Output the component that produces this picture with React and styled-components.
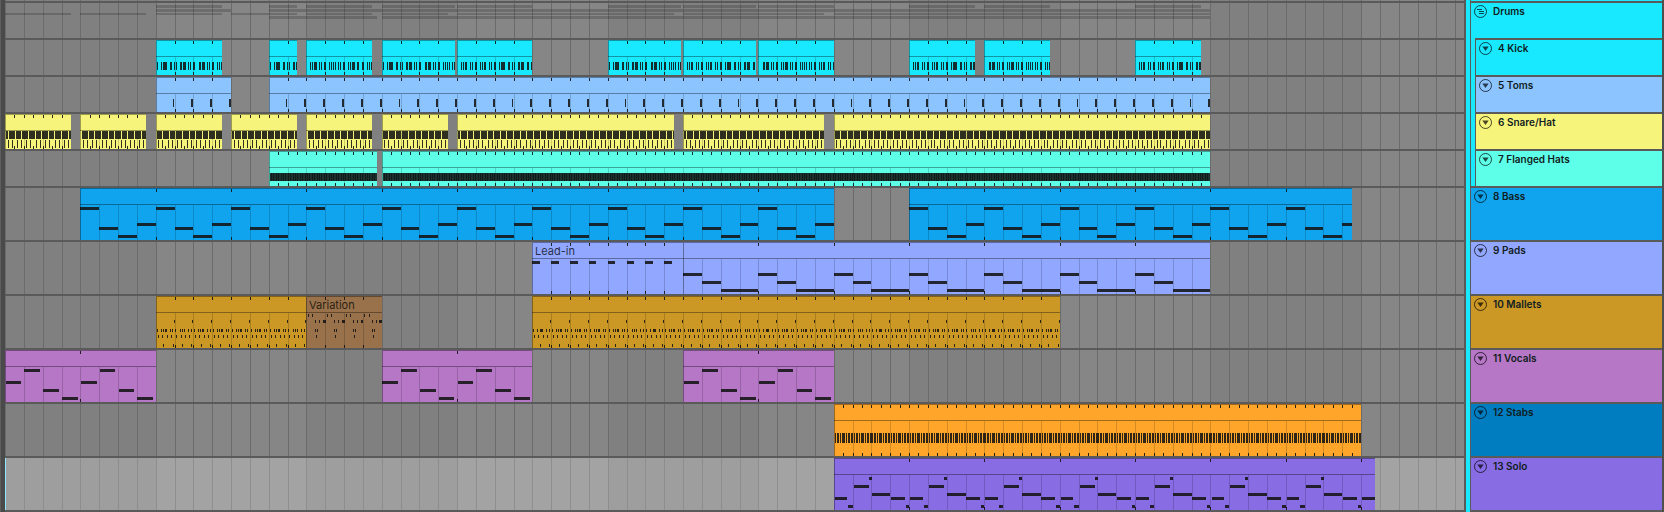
import React from 'react'
import styled, { createGlobalStyle } from 'styled-components'

const BARS = 160
const BAR_WIDTH = 18.834
const TITLE = 16

// x of a bar line, in whole pixels
const bar = (n) => Math.round(n * BAR_WIDTH)

const range = (from, to, step) => {
  const list = []
  for (let n = from; n < to; n += step) list.push(n)
  return list
}

// kick hits: [x, width] in pixels from the start of the clip
const kickA = [[1, 1], [5, 1], [7, 4], [14, 2], [18, 1], [20, 1], [24, 2], [27, 3], [32, 1], [34, 1], [37, 2], [43, 2], [46, 3], [51, 1], [53, 1], [56, 2], [61, 1], [63, 1], [65, 1], [67, 1], [70, 1], [72, 1]]
const kickB = [[4, 1], [6, 1], [8, 2], [13, 1], [15, 1], [18, 2], [23, 1], [25, 1], [27, 2], [32, 1], [34, 1], [37, 2], [42, 1], [44, 4], [51, 2], [55, 1], [57, 1], [61, 2], [64, 3], [70, 2], [74, 1]]
const kickC = [[5, 2], [8, 3], [13, 1], [15, 1], [18, 2], [23, 1], [25, 1], [27, 3], [32, 1], [34, 1], [37, 2], [42, 1], [44, 1], [46, 1], [48, 1], [51, 1], [53, 1], [56, 2], [61, 1], [63, 1], [65, 2], [70, 1], [72, 1], [75, 1]]
const kickD = [[4, 1], [6, 1], [8, 3], [13, 1], [15, 1], [18, 2], [23, 1], [25, 1], [27, 1], [29, 1], [32, 1], [34, 1], [37, 2], [42, 1], [44, 1], [46, 3], [51, 2], [56, 2], [61, 1], [63, 1], [65, 1]]

// stab hits: [x, width] in pixels from each bar line
const stabHits = [[1, 1], [3, 2], [6, 1], [8, 3], [12, 1], [14, 2], [17, 2]]

// a phrase is a list of [start, length, y, height], start and length in bars
const phrase = (clip, every, notes) => {
  const origin = bar(clip.from)
  return range(clip.from, clip.to, every).flatMap((n) =>
    notes.map(([start, length, y, height = 3]) => {
      const x = bar(n + start)
      return { x: x - origin, w: Math.max(1, bar(n + start + length) - x), y, h: height }
    })
  )
}

const drawKick = (clip) => clip.hits.map(([x, w]) => ({ x, w, y: 22, h: 8 }))

const drawToms = (clip) => phrase(clip, 1, [[0.9, 0.095, 22, 8]])

const drawSnare = (clip) => {
  const width = bar(clip.to) - bar(clip.from)
  const gaps = range(clip.gap, width + 7, 6.63).map(Math.round)
  const blocks = gaps.map((g, i) => {
    const x = i === 0 ? 1 : gaps[i - 1] + 1
    return { x, w: Math.max(0, g - x), y: 17, h: 8 }
  })
  return [...blocks, ...phrase(clip, 0.5, [[0.14, 0.05, 26, 8], [0.35, 0.05, 26, 8]])]
}

const drawHats = (clip) => [{ x: 1, w: bar(clip.to) - bar(clip.from), y: 22, h: 8 }]

const drawBass = (clip) => phrase(clip, 4, [[0, 1, 19], [1, 1, 39], [2, 1, 47], [3, 1, 35]])

const drawLeadIn = (clip) => phrase(clip, 1, [[0, 0.4, 19]])

const drawPads = (clip) => phrase(clip, 4, [[0, 1, 31], [1, 1, 39], [2, 2, 47]])

const drawMallets = (clip) => phrase(clip, 1, [
  [0.95, 0.05, 24],
  [0.05, 0.05, 33], [0.27, 0.05, 33], [0.38, 0.05, 33], [0.48, 0.1, 33], [0.74, 0.05, 33], [0.86, 0.05, 33],
  [0.1, 0.05, 39], [0.32, 0.05, 39], [0.58, 0.05, 39], [0.79, 0.05, 39],
  [0.4, 0.05, 48], [0.9, 0.05, 48]
])

const drawVariation = (clip) => phrase(clip, 1, [
  [0.08, 0.05, 18], [0.32, 0.05, 18],
  [0.47, 0.05, 24], [0.68, 0.05, 24], [0.88, 0.15, 24],
  [0.47, 0.05, 33], [0.58, 0.05, 33],
  [0.52, 0.05, 39]
])

const drawVocals = (clip) => phrase(clip, 4, [[0.03, 0.83, 31], [1.03, 0.83, 19], [2.03, 0.83, 39], [3.03, 0.83, 47]])

const drawStabs = (clip) => range(clip.from, clip.to, 1).flatMap((n) =>
  stabHits.map(([x, w]) => ({ x: bar(n) - bar(clip.from) + x, w, y: 29, h: 10 }))
)

const drawSolo = (clip) => phrase(clip, 4, [
  [0.06, 0.67, 39], [0.78, 0.22, 47], [1.06, 0.8, 27], [1.86, 0.15, 19],
  [2.01, 1, 35], [3.03, 0.73, 39], [3.82, 0.18, 47]
])

const drumTracks = [
  {
    name: '4 Kick', color: '#19e9ff', ticks: 1, draw: drawKick,
    clips: [
      { from: 8, to: 11.5, hits: kickA },
      { from: 14, to: 15.5, hits: kickA },
      { from: 16, to: 19.5, hits: kickD },
      { from: 20, to: 23.9, hits: kickA },
      { from: 24, to: 28, hits: kickB },
      { from: 32, to: 35.9, hits: kickA },
      { from: 36, to: 39.9, hits: kickB },
      { from: 40, to: 44, hits: kickC },
      { from: 48, to: 51.5, hits: kickB },
      { from: 52, to: 55.5, hits: kickC },
      { from: 60, to: 63.5, hits: kickB }
    ]
  },
  {
    name: '5 Toms', color: '#8bc4ff', ticks: 1, draw: drawToms,
    clips: [{ from: 8, to: 12 }, { from: 14, to: 64 }]
  },
  {
    name: '6 Snare/Hat', color: '#f7f47c', ticks: 0.5, draw: drawSnare,
    clips: [
      { from: 0, to: 3.5, gap: 3 },
      { from: 4, to: 7.5, gap: 1 },
      { from: 8, to: 11.5, gap: 6 },
      { from: 12, to: 15.5, gap: 3 },
      { from: 16, to: 19.5, gap: 1 },
      { from: 20, to: 23.5, gap: 6 },
      { from: 24, to: 35.5, gap: 3 },
      { from: 36, to: 43.5, gap: 3 },
      { from: 44, to: 64, gap: 6 }
    ]
  },
  {
    name: '7 Flanged Hats', color: '#5dffe8', ticks: 0.5, draw: drawHats, shimmer: true,
    clips: [{ from: 14, to: 19.75 }, { from: 20, to: 64 }]
  }
]

const tracks = [
  {
    name: '8 Bass', color: '#10a4ee', ticks: 4, draw: drawBass,
    clips: [{ from: 4, to: 44 }, { from: 48, to: 71.5 }]
  },
  {
    name: '9 Pads', color: '#92a7ff', ticks: 4, draw: drawPads,
    clips: [
      { from: 28, to: 36, label: 'Lead-in', ticks: 1, draw: drawLeadIn },
      { from: 36, to: 64 }
    ]
  },
  {
    name: '10 Mallets', color: '#cb9826', ticks: 1, draw: drawMallets,
    clips: [
      { from: 8, to: 16 },
      { from: 16, to: 20, label: 'Variation', color: '#99724b', draw: drawVariation },
      { from: 28, to: 56 }
    ]
  },
  {
    name: '11 Vocals', color: '#b677c6', ticks: 4, draw: drawVocals,
    clips: [{ from: 0, to: 8 }, { from: 20, to: 28 }, { from: 36, to: 44 }]
  },
  {
    name: '12 Stabs', color: '#007dc0', clipColor: '#ffa529', ticks: 0.5, draw: drawStabs,
    clips: [{ from: 44, to: 72 }]
  },
  {
    name: '13 Solo', color: '#886ce4', ticks: 4, draw: drawSolo, selected: true,
    clips: [{ from: 44, to: 72.75 }]
  }
]

const Clip = ({ clip, track, height }) => {
  const width = bar(clip.to) - bar(clip.from)
  const inside = (n) => bar(n) - bar(clip.from)
  const ticks = clip.ticks || track.ticks
  const tickList = range(clip.from + ticks, clip.to, ticks).map(inside)
  const draw = clip.draw || track.draw

  return (
    <ClipBox
      $color={clip.color || track.clipColor || track.color}
      style={{ left: bar(clip.from), width }}
    >
      <svg width={width} height={height} shapeRendering="crispEdges" aria-hidden="true">
        {range(clip.from + 1, clip.to, 1).map((n) => (
          <rect key={n} x={inside(n)} y={TITLE + 1} width="1" height={height} fill="#000" opacity=".17" />
        ))}
        <g fill="#141414" opacity=".88">
          {draw(clip).map((note, i) => (
            <rect key={i} x={note.x} y={note.y} width={note.w} height={note.h} />
          ))}
        </g>
        {/* overlapping hat hits */}
        {track.shimmer && range(2, width, 2.4).map((x, i) => (
          <rect key={i} x={Math.round(x)} y="22" width="1" height="8" fill="#0c1413" opacity=".7" />
        ))}
        <g fill="#141414" opacity=".9">
          {tickList.map((x) => <rect key={x} x={x} y="1" width="1" height="3" />)}
          {tickList.map((x) => <rect key={x} x={x} y={height - 3} width="1" height="3" />)}
        </g>
        <rect x="0" y="0" width={width} height="1" opacity=".36" />
        <rect x="0" y={TITLE} width={width} height="1" opacity=".36" />
        <rect x="0" y="1" width="1" height={height} opacity=".36" />
      </svg>
      {clip.label && <ClipLabel>{clip.label}</ClipLabel>}
    </ClipBox>
  )
}

const Lane = ({ track, height }) => (
  <LaneRow $height={height} $selected={track.selected}>
    {track.clips.map((clip) => <Clip key={clip.from} clip={clip} track={track} height={height} />)}
  </LaneRow>
)

// folded summary of the drum clips, one thin line per track
const Overview = () => {
  const lines = [[2, 3], [6, 3], [10, 2], [13, 3]]
  return (
    <svg width={bar(64)} height="35" shapeRendering="crispEdges" aria-hidden="true">
      {drumTracks.map((track, i) => track.clips.map((clip) => (
        <rect
          key={track.name + clip.from}
          x={bar(clip.from)}
          y={lines[i][0]}
          width={bar(clip.to) - bar(clip.from)}
          height={lines[i][1]}
          opacity=".18"
        />
      )))}
    </svg>
  )
}

const FoldIcon = ({ group }) => (
  <svg width="13" height="13" viewBox="0 0 13 13" fill="none" aria-hidden="true">
    <circle cx="6.5" cy="6.5" r="6" stroke="currentColor" />
    {group
      ? <path d="M3 4.5h5M5 6.5h5M5 8.5h5" stroke="currentColor" />
      : <path d="M3.3 4.5h6.4L6.5 9z" fill="currentColor" />}
  </svg>
)

const TrackHeader = ({ name, color, height, group, child }) => (
  <HeaderRow $color={color} $height={height} $child={child} $last={!group && !child}>
    <FoldButton type="button" aria-label={name}><FoldIcon group={group} /></FoldButton>
    <TrackName>{name}</TrackName>
  </HeaderRow>
)

const App = () => {
  return (
    <>
      <GlobalStyle />
      <Page>
        <Gutter />
        <Arrangement>
          <Grid>
            {range(0, BARS, 1).map((n) => (
              <GridBar key={n} $light={n % 16 >= 8} style={{ width: bar(n + 1) - bar(n) }} />
            ))}
          </Grid>
          <TopEdge />
          <LaneRow $height={35}><Overview /></LaneRow>
          {drumTracks.map((track) => <Lane key={track.name} track={track} height={35} />)}
          {tracks.map((track) => <Lane key={track.name} track={track} height={52} />)}
        </Arrangement>
        <GroupStrip />
        <Headers>
          <TopEdge $color="#19e9ff" />
          {/* drum group */}
          <Group>
            <TrackHeader name="Drums" color="#19e9ff" height={35} group />
            {drumTracks.map((track) => (
              <TrackHeader key={track.name} name={track.name} color={track.color} height={35} child />
            ))}
          </Group>
          {/* end of drum group */}
          {tracks.map((track) => (
            <TrackHeader key={track.name} name={track.name} color={track.color} height={52} />
          ))}
        </Headers>
      </Page>
    </>
  )
}

const GlobalStyle = createGlobalStyle`
  * {
    box-sizing: border-box;
  }

  body {
    margin: 0;
    background: #5a5a5a;
    font-family: Inter, "Liberation Sans", sans-serif;
    font-size: 10px;
    color: #101c20;
  }

  svg {
    display: block;
  }
`

const Page = styled.main`
  display: flex;
  overflow: hidden;
`

const Gutter = styled.div`
  flex: none;
  width: 5px;
  background: #4a4a4a;
  border-left: 1px solid #5e5e5e;
`

const Arrangement = styled.section`
  flex: 1;
  min-width: 0;
  position: relative;
  overflow: hidden;
`

const Grid = styled.div`
  position: absolute;
  inset: 0;
  display: flex;
`

const GridBar = styled.div`
  flex: none;
  border-left: 1px solid #6b6b6b;
  background: ${(props) => (props.$light ? '#868686' : '#808080')};
`

const TopEdge = styled.div`
  position: relative;
  height: 3px;
  border-bottom: 2px solid #5a5a5a;
  background: ${(props) => props.$color || 'transparent'};
`

const LaneRow = styled.div`
  position: relative;
  box-sizing: content-box;
  height: ${(props) => props.$height}px;
  border-bottom: 2px solid #5a5a5a;
  background: ${(props) => (props.$selected ? 'rgba(255, 255, 255, .24)' : 'transparent')};
  box-shadow: ${(props) => (props.$selected ? 'inset 1px 0 #8fe6ff' : 'none')};
`

const ClipBox = styled.div`
  position: absolute;
  top: 0;
  bottom: 0;
  overflow: hidden;
  background: ${(props) => props.$color};
`

const ClipLabel = styled.span`
  position: absolute;
  top: 1px;
  left: 3px;
  font-size: 11px;
  line-height: 16px;
  color: rgba(0, 0, 0, .75);
`

const GroupStrip = styled.div`
  flex: none;
  width: 7px;
  background: #19e9ff;
  border: solid #5a5a5a;
  border-width: 0 1px 0 2px;
`

const Headers = styled.aside`
  flex: none;
  width: 193px;
  border-right: 2px solid #4f4f4f;
`

const Group = styled.div`
  background: #19e9ff;
  border-bottom: 2px solid #5a5a5a;
`

const HeaderRow = styled.div`
  display: flex;
  align-items: flex-start;
  gap: 6px;
  box-sizing: content-box;
  height: ${(props) => props.$height}px;
  padding-left: 3px;
  margin-left: ${(props) => (props.$child ? 4 : 0)}px;
  border: solid #5a5a5a;
  border-width: ${(props) => (props.$child ? '2px 0 0 1px' : props.$last ? '0 0 2px' : '0')};
  background: ${(props) => props.$color};
`

const FoldButton = styled.button`
  margin: 2px 0 0;
  padding: 0;
  border: none;
  background: transparent;
  color: rgba(0, 0, 0, .7);
  cursor: pointer;
`

const TrackName = styled.span`
  font-weight: 600;
  line-height: 16px;
  white-space: nowrap;
`

export default App
